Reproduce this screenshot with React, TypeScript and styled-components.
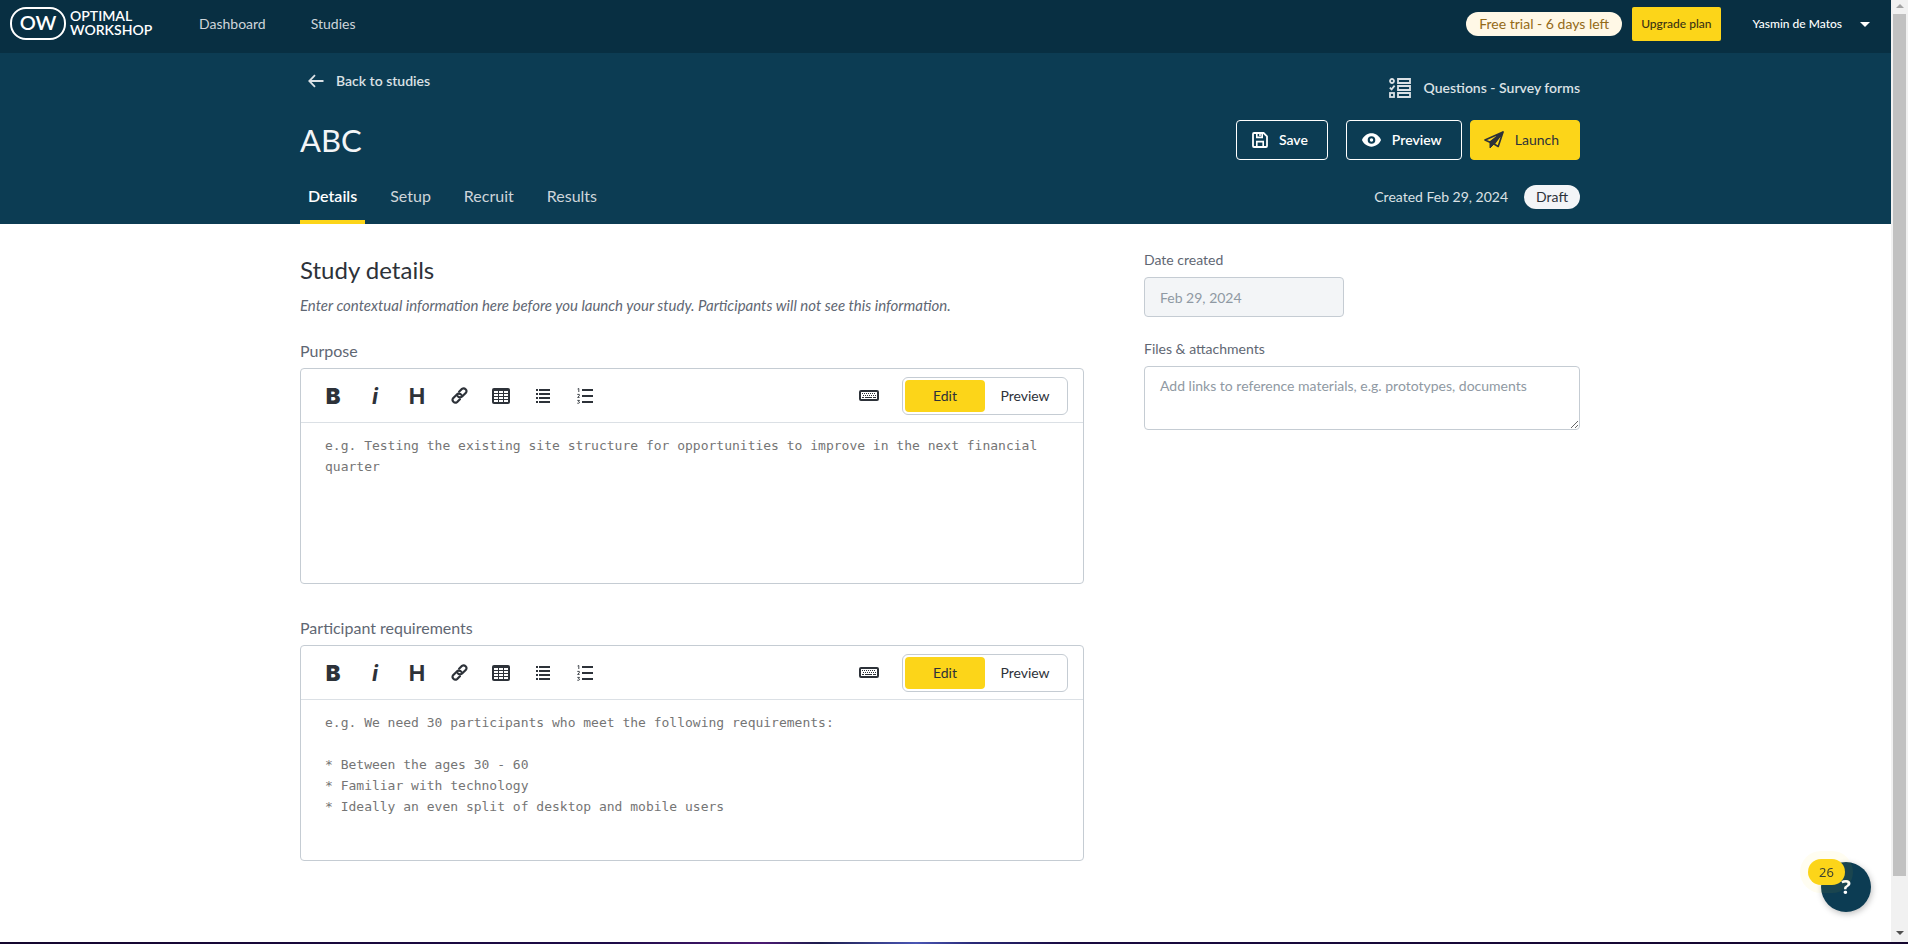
import React, { useState } from 'react';
import styled, { createGlobalStyle, css } from 'styled-components';

const colors = {
  topBar: '#082f42',
  hero: '#0c3c53',
  yellow: '#fcd519',
  ink: '#2d3239',
  label: '#5f6773',
  hint: '#8f99a3',
  border: '#c5ccd3',
};

const sans = 'Lato, "Liberation Sans", sans-serif';

const GlobalStyle = createGlobalStyle`
  *, *::before, *::after { box-sizing: border-box; }
  body { margin: 0; background: #fff; color: ${colors.ink}; font-family: ${sans}; font-size: 14px; line-height: 20px; }
  button, input, textarea { font: inherit; color: inherit; margin: 0; }
  button { cursor: pointer; }
  a { color: inherit; text-decoration: none; }
  h1, h2, p { margin: 0; font-weight: 400; }
  svg { display: block; flex: none; }
`;

const Shell = styled.div`
  display: grid;
  grid-template-columns: minmax(0, 1fr) 17px;
  grid-template-rows: 1fr 2px;
  min-height: 100vh;
`;

const Page = styled.div`
  display: flex;
  flex-direction: column;
`;

/* Top bar */

const TopBar = styled.header`
  display: flex;
  align-items: center;
  height: 53px;
  padding: 0 21px 5px 10px;
  background: ${colors.topBar};
  color: #fff;
`;

const LogoLink = styled.a`
  margin-right: 42px;
`;

const MainNav = styled.nav`
  display: flex;
  gap: 45px;
  color: #ced5da;
`;

const Account = styled.div`
  display: flex;
  align-items: center;
  margin-left: auto;
`;

const TrialPill = styled.span`
  padding: 2px 13px;
  border-radius: 12px;
  background: #fff8e6;
  color: #946a16;
`;

const UpgradeButton = styled.button`
  height: 34px;
  margin: 0 32px 0 10px;
  padding: 0 9px;
  border: 0;
  border-radius: 2px;
  background: ${colors.yellow};
  color: #3a3214;
  font-size: 12px;
  font-weight: 500;
`;

const UserButton = styled.button`
  display: flex;
  align-items: center;
  gap: 18px;
  padding: 0;
  border: 0;
  background: none;
  font-size: 12px;
  font-weight: 500;
`;

/* Study header */

const Hero = styled.section`
  padding-right: 11px;
  background: ${colors.hero};
  color: #dbe1e5;
`;

const Container = styled.div`
  width: 100%;
  max-width: 1280px;
  margin: 0 auto;
`;

const HeroRow = styled.div`
  display: flex;
  align-items: center;
  justify-content: space-between;
`;

const CrumbRow = styled(HeroRow)`
  align-items: flex-start;
  height: 67px;
  padding-top: 18px;
`;

const BackLink = styled.a`
  display: flex;
  align-items: center;
  gap: 12px;
  padding-left: 8px;
  font-weight: 600;
`;

const StudyType = styled.div`
  display: flex;
  align-items: center;
  gap: 12px;
  padding-top: 7px;
  font-weight: 600;
`;

const StudyName = styled.h1`
  color: #f3f5f7;
  font-size: 31px;
  line-height: 40px;
`;

const Actions = styled.div`
  display: flex;
`;

const ActionButton = styled.button<{ $primary?: boolean }>`
  display: flex;
  align-items: center;
  gap: 11px;
  height: 40px;
  padding: 0 19px 0 15px;
  border: 1px solid #fff;
  border-radius: 4px;
  background: none;
  color: #fff;
  font-weight: 600;

  & + & { margin-left: 18px; }

  ${(p) =>
    p.$primary &&
    css`
      && { margin-left: 8px; }
      padding: 0 20px 0 13px;
      border-color: ${colors.yellow};
      background: ${colors.yellow};
      color: ${colors.ink};
      font-weight: 400;
    `}
`;

const TabRow = styled(HeroRow)`
  align-items: flex-start;
  height: 64px;
`;

const Tabs = styled.nav`
  display: flex;
  gap: 17px;
  height: 100%;
`;

const Tab = styled.a<{ $active?: boolean }>`
  padding: 26px 8px 0;
  border-bottom: 4px solid ${(p) => (p.$active ? colors.yellow : 'transparent')};
  color: ${(p) => (p.$active ? '#fff' : '#ced5da')};
  font-size: 16px;
  font-weight: ${(p) => (p.$active ? 600 : 400)};
`;

const Status = styled.div`
  display: flex;
  align-items: center;
  gap: 16px;
  padding-top: 25px;
`;

const DraftPill = styled.span`
  padding: 2px 12px;
  border-radius: 12px;
  background: #f3f5f7;
  color: ${colors.ink};
`;

/* Body */

const Body = styled.main`
  flex: 1;
  padding-right: 11px;
`;

const Columns = styled(Container)`
  display: grid;
  grid-template-columns: minmax(0, 784fr) minmax(0, 436fr);
  gap: 60px;
  padding: 26px 0 80px;
`;

const SectionTitle = styled.h2`
  margin-top: 4px;
  font-size: 24px;
  line-height: 32px;
`;

const Intro = styled.p`
  margin-top: 9px;
  color: ${colors.label};
  font-size: 15px;
  font-style: italic;
`;

const Field = styled.div`
  display: flex;
  flex-direction: column;
`;

const EditorField = styled(Field)`
  margin-top: 26px;

  & + & { margin-top: 34px; }
`;

const EditorLabel = styled.label`
  margin-bottom: 7px;
  color: ${colors.label};
  font-size: 16px;
`;

const EditorBox = styled.div`
  border: 1px solid ${colors.border};
  border-radius: 4px;
`;

const Toolbar = styled.div`
  display: flex;
  align-items: center;
  height: 54px;
  padding: 0 15px 0 11px;
  border-bottom: 1px solid #dbe0e5;
`;

const Tool = styled.button<{ $weight?: number; $italic?: boolean }>`
  display: flex;
  align-items: center;
  justify-content: center;
  width: 42px;
  height: 32px;
  padding: 0;
  border: 0;
  background: none;
  font-family: Inter, sans-serif;
  font-size: 22px;
  font-weight: ${(p) => p.$weight ?? 400};
  font-style: ${(p) => (p.$italic ? 'italic' : 'normal')};
`;

const ModeGroup = styled.div`
  display: flex;
  align-items: center;
  margin-left: auto;
  gap: 12px;
`;

const Toggle = styled.div`
  display: flex;
  height: 38px;
  padding: 2px;
  border: 1px solid ${colors.border};
  border-radius: 6px;
`;

const ToggleButton = styled.button<{ $on: boolean }>`
  width: 80px;
  padding: 0;
  border: 0;
  border-radius: 4px;
  background: ${(p) => (p.$on ? colors.yellow : 'none')};
`;

const EditorText = styled.textarea`
  display: block;
  width: 100%;
  height: 160px;
  padding: 12px 24px;
  border: 0;
  border-radius: 4px;
  outline: 0;
  resize: none;
  background: none;
  font-family: "DejaVu Sans Mono", monospace;
  font-size: 13px;
  line-height: 21px;

  &::placeholder { color: #757575; opacity: 1; }
`;

const SideLabel = styled.label`
  margin-bottom: 7px;
  color: ${colors.label};
`;

const SideFields = styled.aside`
  display: flex;
  flex-direction: column;
  gap: 22px;
`;

const DateInput = styled.input`
  width: 200px;
  height: 40px;
  padding: 0 15px;
  border: 1px solid ${colors.border};
  border-radius: 4px;
  background: #f3f5f7;
  color: ${colors.hint};
`;

const FilesInput = styled.textarea`
  width: 100%;
  height: 64px;
  padding: 9px 15px;
  border: 1px solid ${colors.border};
  border-radius: 4px;
  outline: 0;
  resize: vertical;

  &::placeholder { color: ${colors.hint}; opacity: 1; }
`;

/* Window edges and the help bubble */

const ScrollTrack = styled.div`
  display: flex;
  flex-direction: column;
  align-items: center;
  justify-content: space-between;
  padding: 4px 0 7px;
  background: #f1f1f1;
`;

const ScrollThumb = styled.div`
  flex: 1;
  width: 13px;
  margin: 6px 0 55px;
  background: #c1c1c1;
`;

const Arrow = styled.div<{ $down?: boolean }>`
  border: 4px solid transparent;
  ${(p) => (p.$down ? 'border-top: 4px solid #505050; border-bottom: 0;' : 'border-bottom: 4px solid #a3a3a3; border-top: 0;')}
`;

const Edge = styled.div`
  grid-column: 1 / -1;
  background: linear-gradient(90deg, #14062e, #1d0b48 32%, #4a1a72 40%, #1c1c4c 43%, #4a56b4 48%, #2a2a78 51%, #190a40 56%, #14062e);
`;

const HelpButton = styled.button`
  position: fixed;
  right: 37px;
  bottom: 32px;
  width: 50px;
  height: 50px;
  padding: 0;
  border: 0;
  border-radius: 25px;
  background: ${colors.hero};
  box-shadow: 1px 2px 6px rgba(0, 0, 0, 0.25);
  color: #fff;
  font-family: "Noto Sans", sans-serif;
  font-size: 20px;
  font-weight: 700;
`;

const HelpBadge = styled.span`
  position: absolute;
  top: -3px;
  left: -13px;
  width: 37px;
  border-radius: 13px;
  background: ${colors.yellow};
  box-shadow: 0 0 0 8px rgba(252, 213, 25, 0.06);
  color: #3f4430;
  font-size: 13px;
  font-weight: 400;
  line-height: 26px;
`;

/* Icons */

const Logo = () => (
  <svg width="147" height="34" viewBox="0 0 147 34" fill="#fff" fontFamily={sans} fontWeight="600" role="img" aria-label="Optimal Workshop">
    <rect x="1" y="1" width="54" height="31" rx="15" fill="none" stroke="#fff" strokeWidth="2" />
    <text x="28" y="23" fontSize="20" textAnchor="middle">OW</text>
    <text x="60" y="14" fontSize="14">OPTIMAL</text>
    <text x="60" y="28" fontSize="14">WORKSHOP</text>
  </svg>
);

const BackArrow = () => (
  <svg width="16" height="14" viewBox="0 0 16 14" fill="none" stroke="currentColor" strokeWidth="1.8">
    <path d="M15.5 7H1.5M7 1.2 1.3 7 7 12.8" />
  </svg>
);

const FormIcon = () => (
  <svg width="22" height="20" viewBox="0 0 22 20" fill="none" stroke="currentColor" strokeWidth="1.8">
    <circle cx="3" cy="3" r="2" />
    <path d="M.8 9.6 2.6 11.4 5.6 7.6" />
    <rect x="1" y="15" width="4" height="4" />
    <path d="M9 1h12v4H9zM9 8h12v4H9zM9 15h12v4H9z" />
  </svg>
);

const SaveIcon = () => (
  <svg width="16" height="16" viewBox="0 0 16 16" fill="none" stroke="currentColor" strokeWidth="1.8">
    <path d="M2 1h9.6L15 4.4V14a1 1 0 0 1-1 1H2a1 1 0 0 1-1-1V2a1 1 0 0 1 1-1z" strokeLinejoin="round" />
    <path d="M4.8 1v4.4h5.400V1M8 1v3M4.8 15V9.6h6.4V15" strokeWidth="1.6" />
  </svg>
);

const EyeIcon = () => (
  <svg width="19" height="14" viewBox="0 0 20 14" fill="currentColor">
    <path
      fillRule="evenodd"
      d="M10 0c4.400 0 8 2.800 9.800 6.400.2.400.2.800 0 1.200C18 11.200 14.400 14 10 14S2 11.200.2 7.600a1.300 1.300 0 0 1 0-1.200C2 2.800 5.600 0 10 0zm0 3a4 4 0 1 0 0 8 4 4 0 0 0 0-8z"
    />
    <circle cx="10" cy="7" r="1.800" />
  </svg>
);

const PlaneIcon = () => (
  <svg width="20" height="18" viewBox="0 0 20 18" fill="none" stroke="currentColor" strokeWidth="1.7" strokeLinejoin="round">
    <path d="M19 1 1 9l5 2.200L19 1 14.200 15.400 10 13z" />
    <path d="M6 11.200v5.800l4-4L19 1z" fill="currentColor" strokeWidth="1" />
  </svg>
);

const LinkIcon = () => (
  <svg width="17" height="17" viewBox="0 0 16 16" fill="none" stroke="currentColor" strokeWidth="2" strokeLinecap="round">
    <path d="M6.200 8.600a3 3 0 0 0 4.500.2l3.300-3.300a2.650 2.650 0 0 0-3.700-3.700L7.600 4.400" />
    <path d="M9.800 7.400a3 3 0 0 0-4.500-.2L2 10.500a2.650 2.650 0 0 0 3.700 3.700l2.700-2.600" />
  </svg>
);

const TableIcon = () => (
  <svg width="18" height="16" viewBox="0 0 18 16">
    <rect width="18" height="16" rx="2" fill="currentColor" />
    <path
      fill="#fff"
      d="M2 3h4v2H2zM7 3h4v2H7zM12 3h4v2h-4zM2 6h4v2H2zM7 6h4v2H7zM12 6h4v2h-4zM2 9h4v2H2zM7 9h4v2H7zM12 9h4v2h-4zM2 12h4v2H2zM7 12h4v2H7zM12 12h4v2h-4z"
    />
  </svg>
);

const BulletIcon = () => (
  <svg width="14" height="14" viewBox="0 0 14 14" fill="currentColor">
    <path d="M0 0h2v2H0zM3 0h11v2H3zM0 4h2v2H0zM3 4h11v2H3zM0 8h2v2H0zM3 8h11v2H3zM0 12h2v2H0zM3 12h11v2H3z" />
  </svg>
);

const NumberIcon = () => (
  <svg width="16" height="16" viewBox="0 0 16 16" fill="currentColor">
    <path d="M5 1h11v2H5zM5 7h11v2H5zM5 13h11v2H5z" />
    <path d="M.6 1 1.800.5V4M.3 6.400h2v1.400L.6 9.400h2M.3 12.400h2.200L1.500 13.600q1.200.1 1 1.100-.5.900-2.200.5" fill="none" stroke="currentColor" strokeWidth=".9" />
  </svg>
);

const KeyboardIcon = () => (
  <svg width="20" height="11" viewBox="0 0 20 11">
    <rect x="1" y="1" width="18" height="9" rx="1" fill="#fff" stroke="currentColor" strokeWidth="2" />
    <path d="M3 3.500h14M4 5.500h13" stroke="currentColor" strokeWidth="1" strokeDasharray="1 1" />
    <path d="M3 7.500h2M6 7.500h7M14 7.500h3" stroke="currentColor" strokeWidth="1" />
  </svg>
);

const CaretIcon = () => (
  <svg width="10" height="5" viewBox="0 0 10 5" fill="currentColor">
    <path d="M0 0h10L5 5z" />
  </svg>
);

type EditorProps = { id: string; label: string; placeholder: string };

function Editor({ id, label, placeholder }: EditorProps) {
  const [mode, setMode] = useState<'Edit' | 'Preview'>('Edit');
  return (
    <EditorField>
      <EditorLabel htmlFor={id}>{label}</EditorLabel>
      <EditorBox>
        <Toolbar>
          <Tool type="button" aria-label="Bold" $weight={900}>B</Tool>
          <Tool type="button" aria-label="Italic" $weight={700} $italic>i</Tool>
          <Tool type="button" aria-label="Heading" $weight={700}>H</Tool>
          <Tool type="button" aria-label="Link"><LinkIcon /></Tool>
          <Tool type="button" aria-label="Table"><TableIcon /></Tool>
          <Tool type="button" aria-label="Bulleted list"><BulletIcon /></Tool>
          <Tool type="button" aria-label="Numbered list"><NumberIcon /></Tool>
          <ModeGroup>
            <Tool type="button" aria-label="Keyboard shortcuts"><KeyboardIcon /></Tool>
            <Toggle>
              {(['Edit', 'Preview'] as const).map((m) => (
                <ToggleButton key={m} type="button" $on={mode === m} onClick={() => setMode(m)}>
                  {m}
                </ToggleButton>
              ))}
            </Toggle>
          </ModeGroup>
        </Toolbar>
        <EditorText id={id} placeholder={placeholder} />
      </EditorBox>
    </EditorField>
  );
}

const requirementsHint = [
  'e.g. We need 30 participants who meet the following requirements:',
  '',
  '* Between the ages 30 - 60',
  '* Familiar with technology',
  '* Ideally an even split of desktop and mobile users',
].join('\n');

export default function App() {
  return (
    <>
      <GlobalStyle />
      <Shell>
        <Page>
          <TopBar>
            <LogoLink href="#home"><Logo /></LogoLink>
            <MainNav>
              <a href="#dashboard">Dashboard</a>
              <a href="#studies">Studies</a>
            </MainNav>
            <Account>
              <TrialPill>Free trial - 6 days left</TrialPill>
              <UpgradeButton type="button">Upgrade plan</UpgradeButton>
              <UserButton type="button">
                Yasmin de Matos
                <CaretIcon />
              </UserButton>
            </Account>
          </TopBar>

          <Hero>
            <Container>
              <CrumbRow>
                <BackLink href="#studies"><BackArrow />Back to studies</BackLink>
                <StudyType><FormIcon />Questions - Survey forms</StudyType>
              </CrumbRow>
              <HeroRow>
                <StudyName>ABC</StudyName>
                <Actions>
                  <ActionButton type="button"><SaveIcon />Save</ActionButton>
                  <ActionButton type="button"><EyeIcon />Preview</ActionButton>
                  <ActionButton type="button" $primary><PlaneIcon />Launch</ActionButton>
                </Actions>
              </HeroRow>
              <TabRow>
                <Tabs>
                  <Tab href="#details" $active>Details</Tab>
                  <Tab href="#setup">Setup</Tab>
                  <Tab href="#recruit">Recruit</Tab>
                  <Tab href="#results">Results</Tab>
                </Tabs>
                <Status>
                  Created Feb 29, 2024
                  <DraftPill>Draft</DraftPill>
                </Status>
              </TabRow>
            </Container>
          </Hero>

          <Body>
            <Columns>
              <section>
                <SectionTitle>Study details</SectionTitle>
                <Intro>
                  Enter contextual information here before you launch your study. Participants will not see this information.
                </Intro>
                <Editor
                  id="purpose"
                  label="Purpose"
                  placeholder="e.g. Testing the existing site structure for opportunities to improve in the next financial quarter"
                />
                <Editor id="requirements" label="Participant requirements" placeholder={requirementsHint} />
              </section>
              <SideFields>
                <Field>
                  <SideLabel htmlFor="created">Date created</SideLabel>
                  <DateInput id="created" value="Feb 29, 2024" disabled readOnly />
                </Field>
                <Field>
                  <SideLabel htmlFor="files">Files &amp; attachments</SideLabel>
                  <FilesInput id="files" placeholder="Add links to reference materials, e.g. prototypes, documents" />
                </Field>
              </SideFields>
            </Columns>
          </Body>
        </Page>
        <ScrollTrack aria-hidden="true">
          <Arrow />
          <ScrollThumb />
          <Arrow $down />
        </ScrollTrack>
        <Edge />
      </Shell>
      <HelpButton type="button" aria-label="Help, 26 new items">
        ?<HelpBadge>26</HelpBadge>
      </HelpButton>
    </>
  );
}
